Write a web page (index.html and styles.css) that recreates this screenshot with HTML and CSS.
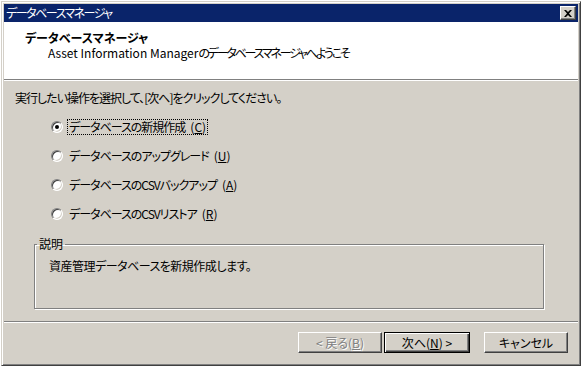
FILE: index.html
```html
<!DOCTYPE html>
<html lang="ja">
<head>
    <meta charset="UTF-8">
    <title>データベースマネージャ</title>
    <link rel="stylesheet" href="styles.css">
</head>
<body>
    <div class="window">
        <div class="titlebar">
            <span class="title">データベースマネージャ</span>
            <span class="close-btn">
                <svg width="8" height="7" viewBox="0 0 8 7"><path d="M0 0h2l2 2 2-2h2L5 3.5 8 7H6L4 5 2 7H0l3-3.5z" fill="#000"/></svg>
            </span>
        </div>

        <div class="header">
            <div class="header-title">データベースマネージャ</div>
            <div class="header-sub">Asset Information Manager<span class="jp">のデータベースマネージャへようこそ</span></div>
        </div>
        <div class="etched"></div>

        <div class="content">
            <p class="prompt">実行したい操作を選択して、[次へ]をクリックしてください。</p>

            <div class="options">
                <label class="option">
                    <span class="radio checked"></span>
                    <span class="option-text focused">データベースの新規作成<span class="key">(<u>C</u>)</span></span>
                </label>
                <label class="option">
                    <span class="radio"></span>
                    <span class="option-text">データベースのアップグレード<span class="key">(<u>U</u>)</span></span>
                </label>
                <label class="option">
                    <span class="radio"></span>
                    <span class="option-text">データベースのCSVバックアップ<span class="key">(<u>A</u>)</span></span>
                </label>
                <label class="option">
                    <span class="radio"></span>
                    <span class="option-text">データベースのCSVリストア<span class="key">(<u>R</u>)</span></span>
                </label>
            </div>

            <fieldset class="groupbox">
                <legend>説明</legend>
                <p>資産管理データベースを新規作成します。</p>
            </fieldset>
        </div>

        <div class="etched"></div>

        <div class="buttons">
            <span class="btn disabled">&lt; 戻る(<u>B</u>)</span>
            <span class="btn default">次へ(<u>N</u>) &gt;</span>
            <span class="btn cancel">キャンセル</span>
        </div>
    </div>
</body>
</html>
```

FILE: styles.css
```css
/* 全体 */
body {
    margin: 0;
    background-color: #ffffff;
    font-family: "Noto Sans CJK JP", "Liberation Sans", sans-serif;
    font-size: 12px;
    font-feature-settings: "palt";
    color: #000;
}

/* ウィンドウ枠 */
.window {
    box-sizing: border-box;
    width: 580px;
    height: 365px;
    margin: 1px 0 0 1px;
    padding: 2px;
    background-color: #d4d0c8;
    border: 1px solid;
    border-color: #d4d0c8 #404040 #404040 #d4d0c8;
    box-shadow: inset 1px 1px #ffffff, inset -1px -1px #808080;
    display: flex;
    flex-direction: column;
}

/* タイトルバー */
.titlebar {
    height: 18px;
    background-color: #0a246a;
    color: #fff;
    display: flex;
    align-items: center;
    justify-content: space-between;
    padding: 0 2px 0 2px;
}

.title {
    line-height: 18px;
    letter-spacing: -1.5px;
}

.close-btn {
    box-sizing: border-box;
    width: 16px;
    height: 14px;
    background-color: #d4d0c8;
    border: 1px solid;
    border-color: #ffffff #404040 #404040 #ffffff;
    box-shadow: inset -1px -1px #808080;
    display: flex;
    align-items: center;
    justify-content: center;
}

/* ヘッダー */
.header {
    height: 57px;
    background-color: #fff;
    padding: 8px 0 0 21px;
    box-sizing: border-box;
}

.header-title {
    font-weight: bold;
    line-height: 15px;
}

.header-sub {
    padding-left: 23px;
    line-height: 15px;
}

.header-sub .jp {
    letter-spacing: -2.2px;
}

/* 区切り線 */
.etched {
    height: 1px;
    background-color: #808080;
    border-bottom: 1px solid #ffffff;
}

.content {
    padding: 10px 0 0 11px;
}

.prompt {
    margin: 0;
    line-height: 14px;
    letter-spacing: -1px;
}

/* ラジオボタン */
.options {
    display: flex;
    flex-direction: column;
    gap: 13px;
    margin: 14px 0 0 36px;
}

.option {
    display: flex;
    align-items: center;
    height: 16px;
    gap: 4px;
}

.radio {
    box-sizing: border-box;
    width: 12px;
    height: 12px;
    border-radius: 50%;
    background-color: #fff;
    border: 1px solid;
    border-color: #808080 #ffffff #ffffff #808080;
    box-shadow: inset 1px 1px #404040, inset -1px -1px #d4d0c8;
    display: flex;
    align-items: center;
    justify-content: center;
}

.radio.checked::after {
    content: "";
    width: 4px;
    height: 4px;
    border-radius: 50%;
    background-color: #000;
}

.option-text {
    line-height: 14px;
    padding: 0 1px;
    border: 1px solid transparent;
    letter-spacing: -1px;
}

.option-text .key {
    margin-left: 5px;
    letter-spacing: 0;
}

.option-text.focused {
    border: 1px dotted #000;
}

/* 説明グループ */
.groupbox {
    box-sizing: border-box;
    height: 72px;
    margin: 15px 34px 12px 19px;
    padding: 8px 0 0 14px;
    border: 1px solid #808080;
    box-shadow: 1px 1px #ffffff, inset 1px 1px #ffffff;
}

.groupbox legend {
    padding: 0 2px;
    margin-left: -12px;
    line-height: 14px;
}

.groupbox p {
    margin: 0;
    line-height: 14px;
    letter-spacing: -0.5px;
}

/* ボタン */
.buttons {
    display: flex;
    justify-content: flex-end;
    padding: 9px 10px 0 0;
}

.btn {
    box-sizing: border-box;
    width: 84px;
    height: 21px;
    background-color: #d4d0c8;
    border: 1px solid;
    border-color: #ffffff #404040 #404040 #ffffff;
    box-shadow: inset -1px -1px #808080;
    display: flex;
    align-items: center;
    justify-content: center;
    line-height: 14px;
}

.btn.disabled {
    color: #808080;
    text-shadow: 1px 1px #ffffff;
}

.btn.default {
    width: 86px;
    margin-left: 2px;
    border: 1px solid #000;
    box-shadow: inset 1px 1px #ffffff, inset -1px -1px #404040, inset -2px -2px #808080;
}

.btn.cancel {
    margin-left: 14px;
}
```
